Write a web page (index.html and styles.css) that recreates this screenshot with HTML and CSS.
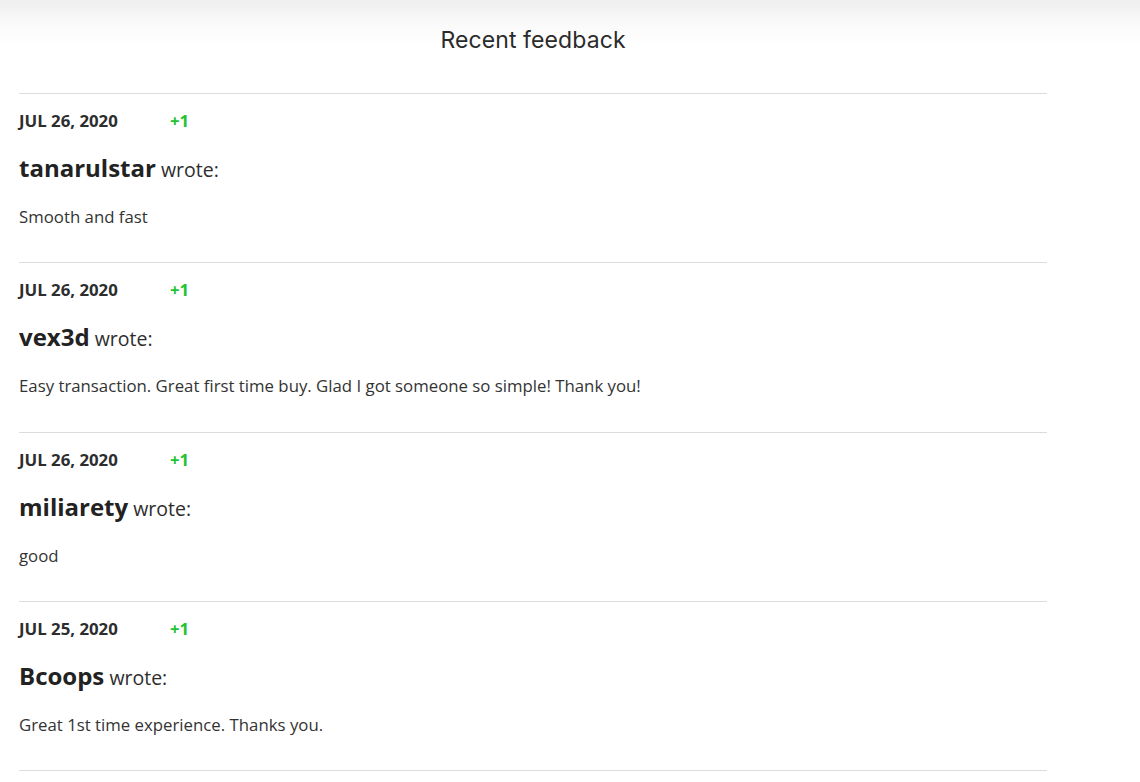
FILE: index.html
```html
<!DOCTYPE html>
<html>
<head>
<meta charset="utf-8">
<link rel="stylesheet" href="styles.css">
</head>
<body>
<div class="page">
  <header class="header">
    <h1 class="title">Recent feedback</h1>
  </header>
  <ul class="feed">
    <li class="item">
      <div class="meta"><span class="date">JUL 26, 2020</span><span class="score">+1</span></div>
      <div class="author"><span class="name">tanarulstar</span> wrote:</div>
      <p class="comment">Smooth and fast</p>
    </li>
    <li class="item">
      <div class="meta"><span class="date">JUL 26, 2020</span><span class="score">+1</span></div>
      <div class="author"><span class="name">vex3d</span> wrote:</div>
      <p class="comment">Easy transaction. Great first time buy. Glad I got someone so simple! Thank you!</p>
    </li>
    <li class="item">
      <div class="meta"><span class="date">JUL 26, 2020</span><span class="score">+1</span></div>
      <div class="author"><span class="name">miliarety</span> wrote:</div>
      <p class="comment">good</p>
    </li>
    <li class="item">
      <div class="meta"><span class="date">JUL 25, 2020</span><span class="score">+1</span></div>
      <div class="author"><span class="name">Bcoops</span> wrote:</div>
      <p class="comment">Great 1st time experience. Thanks you.</p>
    </li>
  </ul>
</div>
</body>
</html>
```
FILE: styles.css
```css
html, body {
  margin: 0;
  padding: 0;
  background: #fff;
}
body {
  font-family: "Open Sans", "Liberation Sans", sans-serif;
  color: #333;
}
.page {
  background: linear-gradient(to bottom, #efefef 0px, #fafafa 25px, #ffffff 45px, #ffffff 100%);
  min-height: 782px;
}
.header {
  height: 93px;
  width: 1028px;
  margin-left: 19px;
  display: flex;
  justify-content: center;
}
.title {
  margin: 0;
  padding-top: 25px;
  font-family: "Inter", "Liberation Sans", sans-serif;
  font-weight: 400;
  font-size: 23px;
  line-height: 30px;
  color: #2b2b2b;
  letter-spacing: 0.1px;
}
.feed {
  list-style: none;
  margin: 0 0 0 19px;
  padding: 0;
  width: 1028px;
}
.item {
  border-top: 1px solid #dcdcdc;
  padding: 17px 0 34px 0;
}
.item:nth-child(2) {
  padding-bottom: 35px;
}
.item:last-child {
  border-bottom: 1px solid #dcdcdc;
}
.meta {
  display: flex;
  align-items: center;
  height: 20px;
  font-size: 16.8px;
  font-weight: 700;
  line-height: 20px;
}
.date {
  width: 151px;
  color: #2d2d2d;
}
.score {
  color: #22c232;
}
.author {
  margin-top: 24px;
  height: 30px;
  font-size: 19.5px;
  line-height: 30px;
  color: #2d2d2d;
}
.name {
  font-size: 24px;
  font-weight: 700;
  line-height: 1;
  color: #222;
}
.comment {
  margin: 21px 0 0 0;
  height: 22px;
  font-size: 16.8px;
  line-height: 22px;
  color: #333;
}
```
